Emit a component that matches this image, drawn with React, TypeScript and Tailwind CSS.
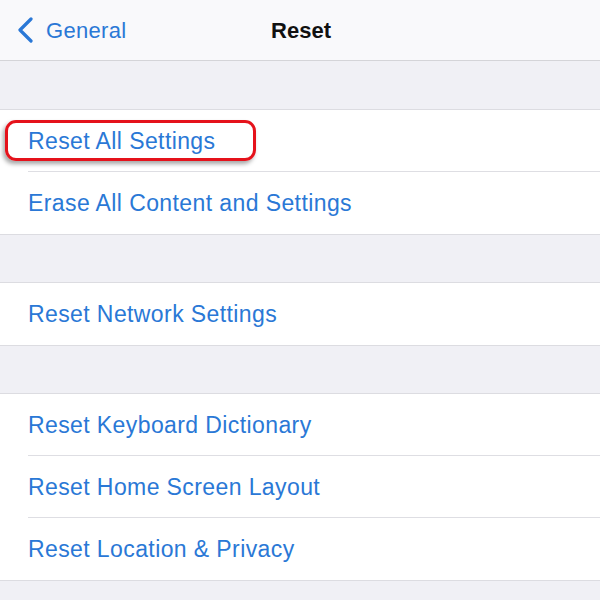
import React from 'react';

type Group = string[];

const groups: Group[] = [
  ['Reset All Settings', 'Erase All Content and Settings'],
  ['Reset Network Settings'],
  ['Reset Keyboard Dictionary', 'Reset Home Screen Layout', 'Reset Location & Privacy'],
];

function Row({ label, last, highlight }: { label: string; last: boolean; highlight?: boolean }) {
  return (
    <div className="relative h-[62px] flex items-center pl-[28px]">
      <span className="text-[23px] text-[#2a78d6] tracking-[0.4px]">{label}</span>
      {highlight && (
        <div className="absolute left-[5px] top-[10px] w-[251px] h-[41px] rounded-[11px] border-[3px] border-[#e5121b] shadow-[-2px_3px_4px_rgba(0,0,0,0.35)]" />
      )}
      {!last && <div className="absolute left-[28px] right-0 bottom-0 h-px bg-[#dedee3]" />}
    </div>
  );
}

export default function App() {
  return (
    <div className="w-[600px] h-[600px] overflow-hidden bg-[#f0f0f5] font-['Liberation_Sans',Arial,sans-serif]">
      {/* nav bar */}
      <div className="relative h-[61px] bg-[#f9f9fb] border-b border-[#d4d4d8] flex items-center">
        <div className="flex items-center pl-[16px] gap-[12px]">
          <svg width="18" height="26" viewBox="0 0 18 26" fill="none">
            <path d="M15 2 L4 13 L15 24" stroke="#2a78d6" strokeWidth="3.2" strokeLinecap="round" strokeLinejoin="round" />
          </svg>
          <span className="text-[22px] text-[#2a78d6] tracking-[0.3px]">General</span>
        </div>
        <span className="absolute left-0 right-0 text-center text-[22px] font-bold text-[#111] pl-[2px]">Reset</span>
      </div>

      {groups.map((g, gi) => (
        <div key={gi} className={`${gi === 0 ? 'mt-[48px]' : 'mt-[47px]'} bg-white border-y border-[#dcdce1]`}>
          {g.map((label, i) => (
            <Row key={label} label={label} last={i === g.length - 1} highlight={gi === 0 && i === 0} />
          ))}
        </div>
      ))}
    </div>
  );
}
